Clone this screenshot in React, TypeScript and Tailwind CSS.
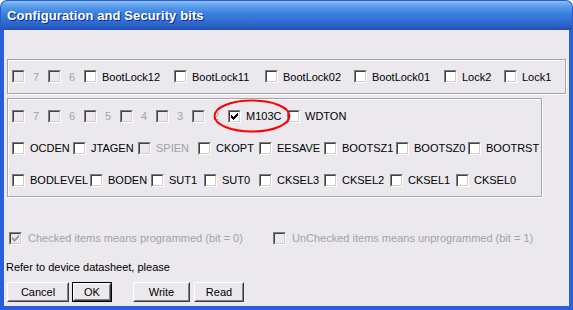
import React from "react";

type Item = {
  label: string;
  w?: string;
  disabled?: boolean;
  checked?: boolean;
  digit?: boolean;
};

const Check = ({ checked, disabled }: { checked?: boolean; disabled?: boolean }) => (
  <span className="block w-[13px] h-[13px] shrink-0 border border-t-[#808080] border-l-[#808080] border-r-white border-b-white">
    <span
      className={
        "relative block w-[11px] h-[11px] border border-t-[#404040] border-l-[#404040] border-r-[#d4d0c8] border-b-[#d4d0c8] " +
        (disabled ? "bg-[#ebe9ed]" : "bg-white")
      }
    >
      {checked && (
        <svg
          width="7"
          height="7"
          viewBox="0 0 7 7"
          shapeRendering="crispEdges"
          className="absolute left-[1px] top-[1px]"
        >
          {[2, 3, 4, 3, 2, 1, 0].map((y, x) => (
            <rect key={x} x={x} y={y} width="1" height="3" fill={disabled ? "#a0a0a0" : "#000"} />
          ))}
        </svg>
      )}
    </span>
  </span>
);

const Option = ({ item }: { item: Item }) => (
  <div className={"flex items-center shrink-0 " + (item.w || "")}>
    <Check checked={item.checked} disabled={item.disabled} />
    <span
      className={
        (item.digit ? "ml-[8px] " : "ml-[5px] ") +
        (item.disabled ? "text-[#a3a2a6]" : "text-black") +
        " leading-[14px] whitespace-nowrap"
      }
    >
      {item.label}
    </span>
  </div>
);

const row1: Item[] = [
  { label: "7", w: "w-[36px]", disabled: true, digit: true },
  { label: "6", w: "w-[36px]", disabled: true, digit: true },
  { label: "BootLock12", w: "w-[90px]" },
  { label: "BootLock11", w: "w-[91px]" },
  { label: "BootLock02", w: "w-[89px]" },
  { label: "BootLock01", w: "w-[90px]" },
  { label: "Lock2", w: "w-[60px]" },
  { label: "Lock1" },
];

const row2: Item[] = [
  { label: "7", w: "w-[36px]", disabled: true, digit: true },
  { label: "6", w: "w-[36px]", disabled: true, digit: true },
  { label: "5", w: "w-[36px]", disabled: true, digit: true },
  { label: "4", w: "w-[36px]", disabled: true, digit: true },
  { label: "3", w: "w-[36px]", disabled: true, digit: true },
  { label: "2", w: "w-[36px]", disabled: true, digit: true },
  { label: "M103C", w: "w-[59px]", checked: true },
  { label: "WDTON" },
];

const row3: Item[] = [
  { label: "OCDEN", w: "w-[61px]" },
  { label: "JTAGEN", w: "w-[65px]" },
  { label: "SPIEN", w: "w-[60px]", disabled: true },
  { label: "CKOPT", w: "w-[61px]" },
  { label: "EESAVE", w: "w-[65px]" },
  { label: "BOOTSZ1", w: "w-[72px]" },
  { label: "BOOTSZ0", w: "w-[72px]" },
  { label: "BOOTRST" },
];

const row4: Item[] = [
  { label: "BODLEVEL", w: "w-[78px]" },
  { label: "BODEN", w: "w-[61px]" },
  { label: "SUT1", w: "w-[53px]" },
  { label: "SUT0", w: "w-[55px]" },
  { label: "CKSEL3", w: "w-[65px]" },
  { label: "CKSEL2", w: "w-[66px]" },
  { label: "CKSEL1", w: "w-[66px]" },
  { label: "CKSEL0" },
];

const Row = ({ items }: { items: Item[] }) => (
  <div className="flex items-center h-[20px]">
    {items.map((it, i) => (
      <Option key={i} item={it} />
    ))}
  </div>
);

const Btn = ({ label, w, def }: { label: string; w: string; def?: boolean }) => (
  <div className={w + " h-[20px] " + (def ? "border border-black" : "")}>
    <div className="h-full w-full border border-t-white border-l-white border-r-[#404040] border-b-[#404040]">
      <div className="h-full w-full border border-t-[#ebe9ed] border-l-[#ebe9ed] border-r-[#808080] border-b-[#808080] flex items-center justify-center text-black leading-none">
        {label}
      </div>
    </div>
  </div>
);

export default function App() {
  return (
    <div className="w-[573px] h-[310px] flex flex-col bg-white font-['Liberation_Sans',Arial,sans-serif] text-[11px]">
      <div className="h-[30px] shrink-0 rounded-t-[7px] border-t border-l border-r border-[#2a5ccc] bg-[linear-gradient(180deg,#8ec0f5_0%,#62a2ee_14%,#3b81de_42%,#2e6cd3_72%,#2451b6_100%)] flex items-center pl-[6px]">
        <span className="text-white font-bold text-[13px] [text-shadow:1px_1px_0_#0b2a8c] tracking-[0.1px]">
          Configuration and Security bits
        </span>
      </div>
      <div className="relative flex-1 flex flex-col bg-[#ebe9ed] border-l-4 border-r-4 border-b-4 border-[#2a5fdc]">
        <div className="mt-[29px] ml-[3px] w-[559px] h-[35px] border border-[#a5a5a8] shadow-[inset_1px_1px_0_#fff,1px_1px_0_#fff] flex items-center pl-[4px]">
          <Row items={row1} />
        </div>
        <div className="mt-[4px] ml-[3px] w-[535px] h-[99px] border border-[#a5a5a8] shadow-[inset_1px_1px_0_#fff,1px_1px_0_#fff] flex flex-col gap-[12px] pt-[7px] pl-[4px]">
          <Row items={row2} />
          <Row items={row3} />
          <Row items={row4} />
        </div>

        <div className="mt-[33px] ml-[5px] h-[16px] flex items-center text-[#a3a2a6]">
          <div className="w-[264px] flex items-center shrink-0">
            <Check checked disabled />
            <span className="ml-[6px] whitespace-nowrap">Checked items means programmed (bit = 0)</span>
          </div>
          <div className="flex items-center">
            <Check disabled />
            <span className="ml-[6px] whitespace-nowrap">UnChecked items means unprogrammed (bit = 1)</span>
          </div>
        </div>

        <div className="mt-[14px] ml-[2px] h-[14px] leading-[14px] text-black">
          Refer to device datasheet, please
        </div>

        <div className="mt-[8px] ml-[3px] flex">
          <Btn label="Cancel" w="w-[62px]" />
          <div className="ml-[3px]">
            <Btn label="OK" w="w-[40px]" def />
          </div>
          <div className="ml-[21px]">
            <Btn label="Write" w="w-[57px]" />
          </div>
          <div className="ml-[4px]">
            <Btn label="Read" w="w-[50px]" />
          </div>
        </div>

        <svg
          className="absolute left-[209px] top-[69px]"
          width="78"
          height="34"
          viewBox="0 0 78 34"
        >
          <ellipse cx="39" cy="17" rx="37.5" ry="15.5" fill="none" stroke="#ff0000" strokeWidth="2" />
        </svg>
      </div>
    </div>
  );
}
